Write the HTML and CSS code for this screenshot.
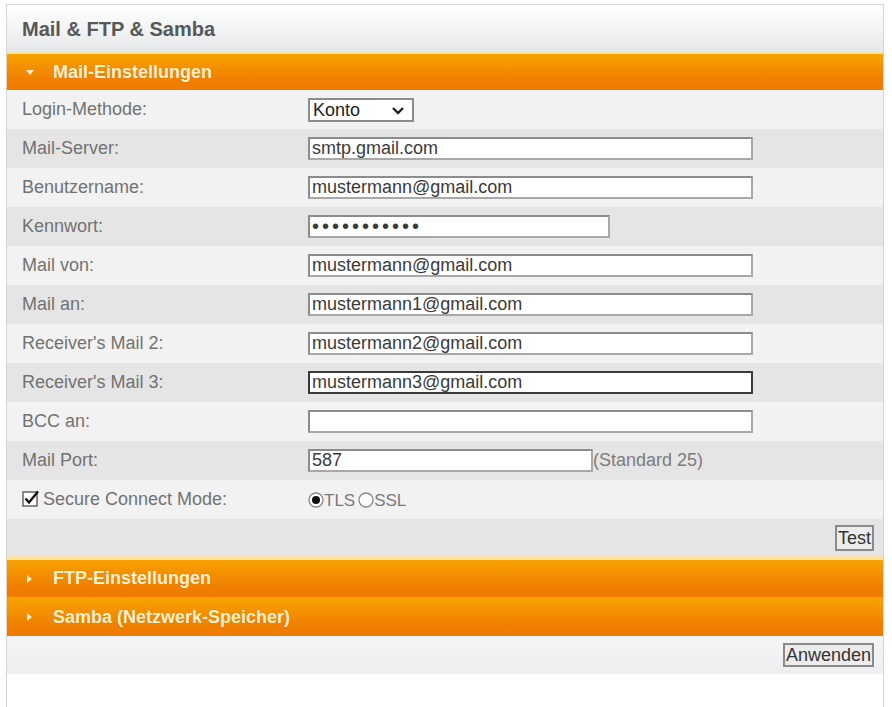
FILE: index.html
```html
<!DOCTYPE html>
<html lang="de">

<head>
    <meta charset="UTF-8">
    <meta name="viewport" content="width=device-width, initial-scale=1.0">
    <title>Mail &amp; FTP &amp; Samba</title>
    <link rel="stylesheet" href="styles.css">
</head>

<body>
    <div class="panel">
        <div class="panel_title">Mail &amp; FTP &amp; Samba</div>

        <div class="section_head open"><span class="arrow"></span>Mail-Einstellungen</div>
        <div class="form">
            <div class="row">
                <div class="label">Login-Methode:</div>
                <div class="field">
                    <span class="select_wrap">
                        <select class="select">
                            <option>Konto</option>
                        </select>
                        <svg class="chevron" width="14" height="10" viewBox="0 0 14 10">
                            <path d="M2 2 L7 7 L12 2" fill="none" stroke="#222" stroke-width="2.4" />
                        </svg>
                    </span>
                </div>
            </div>
            <div class="row">
                <div class="label">Mail-Server:</div>
                <div class="field"><input class="text long" type="text" value="smtp.gmail.com"></div>
            </div>
            <div class="row">
                <div class="label">Benutzername:</div>
                <div class="field"><input class="text long" type="text" value="mustermann@gmail.com"></div>
            </div>
            <div class="row">
                <div class="label">Kennwort:</div>
                <div class="field"><input class="text pass" type="password" value="geheimwort1"></div>
            </div>
            <div class="row">
                <div class="label">Mail von:</div>
                <div class="field"><input class="text long" type="text" value="mustermann@gmail.com"></div>
            </div>
            <div class="row">
                <div class="label">Mail an:</div>
                <div class="field"><input class="text long" type="text" value="mustermann1@gmail.com"></div>
            </div>
            <div class="row">
                <div class="label">Receiver's Mail 2:</div>
                <div class="field"><input class="text long" type="text" value="mustermann2@gmail.com"></div>
            </div>
            <div class="row">
                <div class="label">Receiver's Mail 3:</div>
                <div class="field"><input class="text long active" type="text" value="mustermann3@gmail.com"></div>
            </div>
            <div class="row">
                <div class="label">BCC an:</div>
                <div class="field"><input class="text long" type="text" value=""></div>
            </div>
            <div class="row">
                <div class="label">Mail Port:</div>
                <div class="field"><input class="text port" type="text" value="587"><span class="hint">(Standard 25)</span></div>
            </div>
            <div class="row">
                <div class="label">
                    <svg class="check" width="18" height="17" viewBox="0 0 18 17">
                        <rect x="1" y="2" width="14" height="14" fill="#fff" stroke="#666" stroke-width="1.5" />
                        <path d="M3.5 8.5 L7 12.5 L16 1.5" fill="none" stroke="#111" stroke-width="2.4" />
                    </svg>Secure Connect Mode:
                </div>
                <div class="field radios">
                    <svg class="radio" width="16" height="16" viewBox="0 0 16 16">
                        <circle cx="8" cy="8" r="7" fill="#fff" stroke="#888" stroke-width="1.3" />
                        <circle cx="8" cy="8" r="4" fill="#111" />
                    </svg><span class="radio_text">TLS</span>
                    <svg class="radio" width="16" height="16" viewBox="0 0 16 16">
                        <circle cx="8" cy="8" r="7" fill="#fff" stroke="#888" stroke-width="1.3" />
                    </svg><span class="radio_text">SSL</span>
                </div>
            </div>
            <div class="row button_row">
                <button class="btn">Test</button>
            </div>
        </div>

        <div class="section_head"><span class="arrow"></span>FTP-Einstellungen</div>
        <div class="section_head"><span class="arrow"></span>Samba (Netzwerk-Speicher)</div>

        <div class="apply_row">
            <button class="btn">Anwenden</button>
        </div>
    </div>
</body>

</html>
```

FILE: styles.css
```css
* {
    margin: 0;
    padding: 0;
    box-sizing: border-box;
}

body {
    background: #fff;
    padding: 4px 8px 0 6px;
    font-family: "Liberation Sans", Arial, sans-serif;
    font-size: 18px;
    color: #727272;
}

.panel {
    border: 1px solid #d4d4d4;
    border-bottom: none;
    height: 720px;
    background: #fff;
}

.panel_title {
    height: 47px;
    padding-left: 15px;
    padding-top: 2px;
    display: flex;
    align-items: center;
    font-size: 20px;
    font-weight: bold;
    color: #585858;
    background: linear-gradient(#ffffff, #e6e8ea);
}

.section_head {
    height: 39px;
    display: flex;
    align-items: center;
    padding-left: 19px;
    font-size: 18px;
    font-weight: bold;
    color: #fdf0cf;
    text-shadow: 0 0 1px #d47a00;
    border-top: 2px solid #fde2a6;
    background: linear-gradient(#f8a200, #f08000 70%, #ef7a00);
}

.section_head.open {
    height: 38px;
}

.section_head + .section_head {
    border-top: 1px solid #f7a400;
}

.arrow {
    width: 0;
    height: 0;
    margin-right: 21px;
    margin-left: 1px;
    border-top: 4px solid transparent;
    border-bottom: 4px solid transparent;
    border-left: 5px solid #fdf0cf;
}

.open .arrow {
    margin-right: 19px;
    margin-left: 0;
    border-left: 4px solid transparent;
    border-right: 4px solid transparent;
    border-top: 5px solid #fdf0cf;
    border-bottom: none;
}

.row {
    height: 39px;
    display: flex;
    align-items: center;
    background: #f2f2f2;
}

.row:nth-child(even) {
    background: #e5e5e5;
}

.label {
    width: 301px;
    padding-left: 15px;
    display: flex;
    align-items: center;
}

.field {
    display: flex;
    align-items: center;
}

.text {
    height: 23px;
    border: 2px solid #8c8c8c;
    border-right-color: #a8a8a8;
    border-bottom-color: #a8a8a8;
    background: #fff;
    padding: 0 2px;
    font-family: "Liberation Sans", Arial, sans-serif;
    font-size: 18px;
    color: #3a3a3a;
    outline: none;
}

.long {
    width: 445px;
}

.pass {
    width: 302px;
    letter-spacing: 3px;
    font-size: 20px;
}

.port {
    width: 285px;
}

.active {
    border-color: #3a3a3a;
}

.hint {
    color: #7c7c7c;
}

.select_wrap {
    position: relative;
    display: inline-block;
}

.select {
    appearance: none;
    -webkit-appearance: none;
    width: 106px;
    height: 24px;
    border: 2px solid #8c8c8c;
    background: #fff;
    padding-left: 3px;
    font-family: "Liberation Sans", Arial, sans-serif;
    font-size: 18px;
    color: #222;
    outline: none;
}

.chevron {
    position: absolute;
    right: 9px;
    top: 8px;
}

.check {
    margin-right: 3px;
    margin-top: -2px;
    flex: none;
}

.radio {
    flex: none;
}

.radio_text {
    font-size: 17px;
    color: #7a7a7a;
    margin-right: 3px;
    margin-top: 2px;
}

.button_row {
    justify-content: flex-end;
    padding-right: 9px;
    border-bottom: 2px solid #fde2a6;
}

.btn {
    font-family: "Liberation Sans", Arial, sans-serif;
    font-size: 18px;
    color: #333;
    background: #ececec;
    border: 2px solid #8a8a8a;
    height: 26px;
    padding: 0 1px;
    line-height: 20px;
}

.apply_row {
    height: 38px;
    display: flex;
    justify-content: flex-end;
    align-items: center;
    padding-right: 9px;
    background: linear-gradient(#f4f5f6, #eceef0);
}

.apply_row .btn {
    height: 24px;
}
```
